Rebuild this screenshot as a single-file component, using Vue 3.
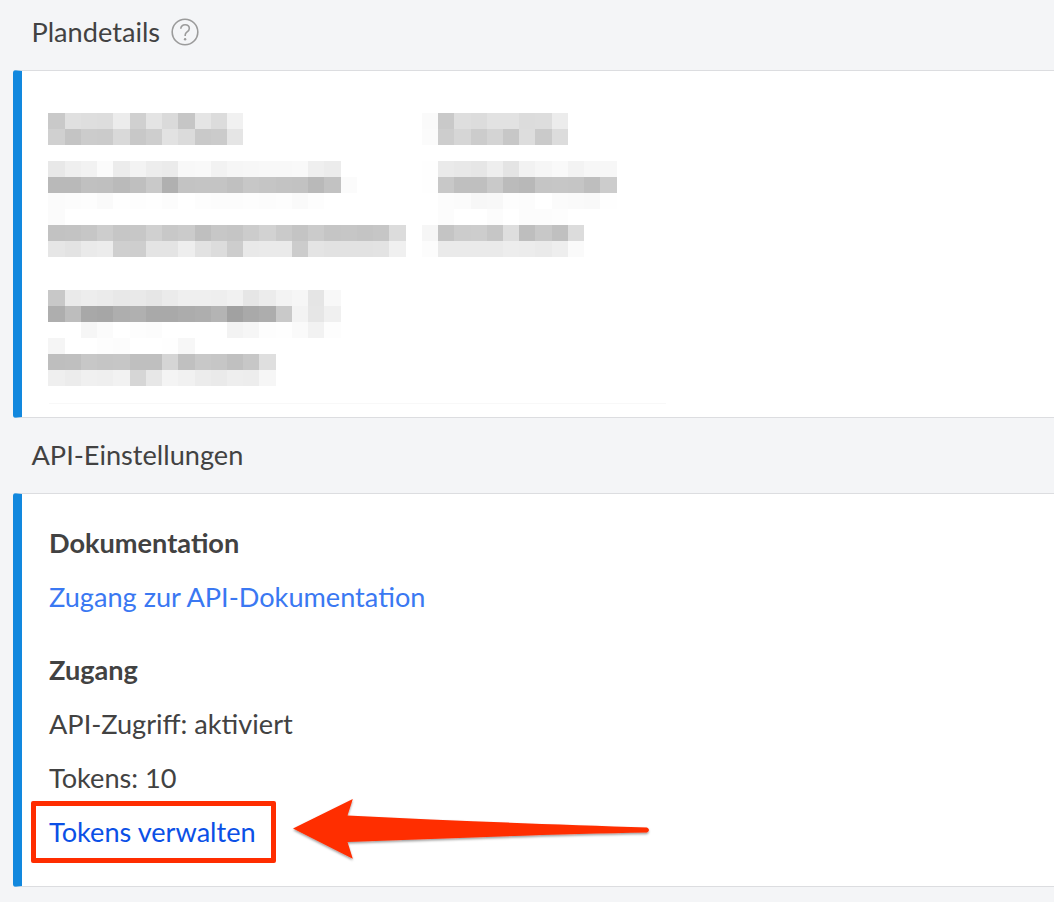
<script setup>
const pad = (s) => {
  const a = s ? s.split(' ') : []
  while (a.length < 23) a.push('ff')
  return a
}
const row = (left, right = '') => [...pad(left), ...(right ? right.split(' ') : [])]
const rows = [
  row('c9 e0 de dd ec d0 e4 da c6 e5 dc f1', 'fa c9 de dc e2 e2 dc dd ec'),
  row('d0 c4 cc cb d9 c8 ce e2 db c9 cb e5', 'fb cd d6 cc d4 c7 dd ca dc'),
  row('ff', ''),
  row('e8 ef f2 fb ec f3 ed eb f8 f9 f2 f6 f7 f8 f8 f9 ef ec', 'fe ea e8 e6 ee e4 f2 f6 f9 f3 f7 f7'),
  row('b9 b9 c0 bf ba bf c9 b0 c3 c4 c4 c0 c7 c5 c3 c2 b9 c2 fb', 'fe c8 bf bf c9 bb b8 c5 c6 c5 be cc'),
  row('fb fc fd fa fe fd fe fc ff fd fc fc fd fc fd fa fd ff', 'ff fc fb f7 f8 fd fc ff fb fa f9 fe'),
  row('fb', 'ff fc ff ff fc ff fc fc fd'),
  row('c2 c3 c6 cd c6 c7 d0 c8 cb bf c7 c5 cc d2 ca c4 cb c5 c6 c4 c6 dc', 'f6 c4 cc cd c6 de be c8 c0 dc'),
  row('e6 e3 ea ec cf ce e4 e4 ee e2 dc cd e9 ea ea cc e4 e2 e2 e2 e3 f0', 'fc ea ea ea ea ed ec ea ee fa'),
]
const gapRows = [
  row('c8 ea ed eb e8 e9 e6 eb ef ef ee f1 e6 ec f3 f6 e5 f8'),
  row('ae bd a8 a6 ae b0 a9 a9 ac ae b4 a1 a9 ad c9 f3 e6 f0'),
  row('ff ff f6 fb ff fd fc ff ff ff ff f3 f6 fd fe fa f2 fd'),
  row('f5 ff ff fd fc ff ff fe f7'),
  row('be bf c7 c5 c6 bf bf d5 c0 c8 c6 c0 c7 df'),
  row('ef ec f0 ef f2 d6 e7 f4 f1 ec ea ee ed f6'),
]
const shade = (v) => `#${v}${v}${v}`
</script>

<template>
  <div class="page">
    <header class="head head-first">
      <h2>Plandetails</h2>
      <svg class="help" viewBox="0 0 28 28" width="28" height="28" aria-hidden="true">
        <circle cx="14" cy="14" r="12.8" fill="none" stroke="#9b9b9b" stroke-width="1.6" />
        <path d="M9.800 10.800c0-2.500 1.900-4.100 4.300-4.100s4.200 1.500 4.200 3.700c0 1.600-.9 2.500-2.200 3.500-1.300 1-1.900 1.700-1.900 3.200v.9" fill="none" stroke="#9b9b9b" stroke-width="1.600" />
        <circle cx="14.100" cy="21.300" r="1.200" fill="#9b9b9b" />
      </svg>
    </header>
    <section class="card card-plan">
      <div class="mosaic">
        <div v-for="(r, i) in rows" :key="'a' + i" class="mrow">
          <span v-for="(v, j) in r" :key="j" class="cell" :style="{ background: shade(v) }"></span>
        </div>
      </div>
      <div class="mosaic mosaic-second">
        <div v-for="(r, i) in gapRows" :key="'b' + i" class="mrow">
          <span v-for="(v, j) in r" :key="j" class="cell" :style="{ background: shade(v) }"></span>
        </div>
      </div>
      <div class="faint"></div>
    </section>

    <header class="head head-second">
      <h2>API-Einstellungen</h2>
    </header>
    <section class="card card-api">
      <h3>Dokumentation</h3>
      <p><a class="doc-link" href="#">Zugang zur API-Dokumentation</a></p>
      <h3 class="second">Zugang</h3>
      <p>API-Zugriff: aktiviert</p>
      <p>Tokens: 10</p>
      <p class="manage">
        <a class="token-link" href="#">Tokens verwalten</a>
        <span class="redbox"></span>
      </p>
    </section>

    <svg class="arrow" viewBox="0 0 1054 902" width="1054" height="902" aria-hidden="true">
      <defs>
        <filter id="sh" x="-5%" y="-20%" width="110%" height="150%">
          <feDropShadow dx="0" dy="1.500" stdDeviation="1" flood-color="#000" flood-opacity="0.4" />
        </filter>
      </defs>
      <path
        filter="url(#sh)"
        fill="#ff2d00"
        d="M293 828.500 L352.800 799 L347.500 815.500 C450 821 560 824.500 647 827.500 Q651 830 647 832.500 C560 834 450 838 347.500 842 L352.800 858.800 Z"
      />
    </svg>
  </div>
</template>

<style scoped>
.page {
  position: relative;
  width: 1054px;
  height: 902px;
  overflow: hidden;
  background: #f4f5f7;
  font-family: Lato, "Open Sans", sans-serif;
  color: #424242;
  font-size: 27.15px;
}
.head {
  display: flex;
  align-items: center;
  gap: 11px;
  box-sizing: border-box;
  padding-left: 31.5px;
}
.head-first {
  height: 70px;
  padding-bottom: 6px;
}
.head-second {
  height: 75px;
  padding-bottom: 2px;
}
.head h2 {
  margin: 0;
  font-size: 27.15px;
  font-weight: 400;
  line-height: 36px;
}
.help {
  display: block;
  flex: none;
}
.card {
  box-sizing: border-box;
  margin-left: 13px;
  background: #fff;
  border-top: 1px solid #dcdde0;
  border-bottom: 1px solid #dcdde0;
  border-left: 9px solid #1288de;
  border-radius: 3px 0 0 3px;
  padding-left: 27px;
}
.card-plan {
  height: 348px;
  padding-top: 42px;
}
.mosaic {
  margin-left: -0.6px;
}
.mosaic-second {
  margin-top: 33px;
}
.mrow {
  display: flex;
  height: 16px;
}
.cell {
  flex: none;
  width: 16.24px;
  height: 16px;
}
.faint {
  width: 617px;
  height: 1px;
  margin-top: 17px;
  background: #f8f8f8;
}
.card-api {
  height: 394px;
  padding-top: 31px;
}
.card-api h3 {
  margin: 0 0 18px;
  font-size: 27.15px;
  font-weight: 700;
  line-height: 36px;
}
.card-api h3.second {
  margin-top: 37px;
}
.card-api p {
  margin: 0 0 18px;
  line-height: 36px;
}
.doc-link {
  color: #3a78f2;
  text-decoration: none;
}
.token-link {
  color: #0b50e6;
  text-decoration: none;
}
.manage {
  position: relative;
}
.redbox {
  position: absolute;
  left: -18px;
  top: -13px;
  width: 245px;
  height: 61.5px;
  box-sizing: border-box;
  border: 5.5px solid #ff2d00;
  border-radius: 2px;
}
.arrow {
  position: absolute;
  inset: 0;
  pointer-events: none;
}
</style>
